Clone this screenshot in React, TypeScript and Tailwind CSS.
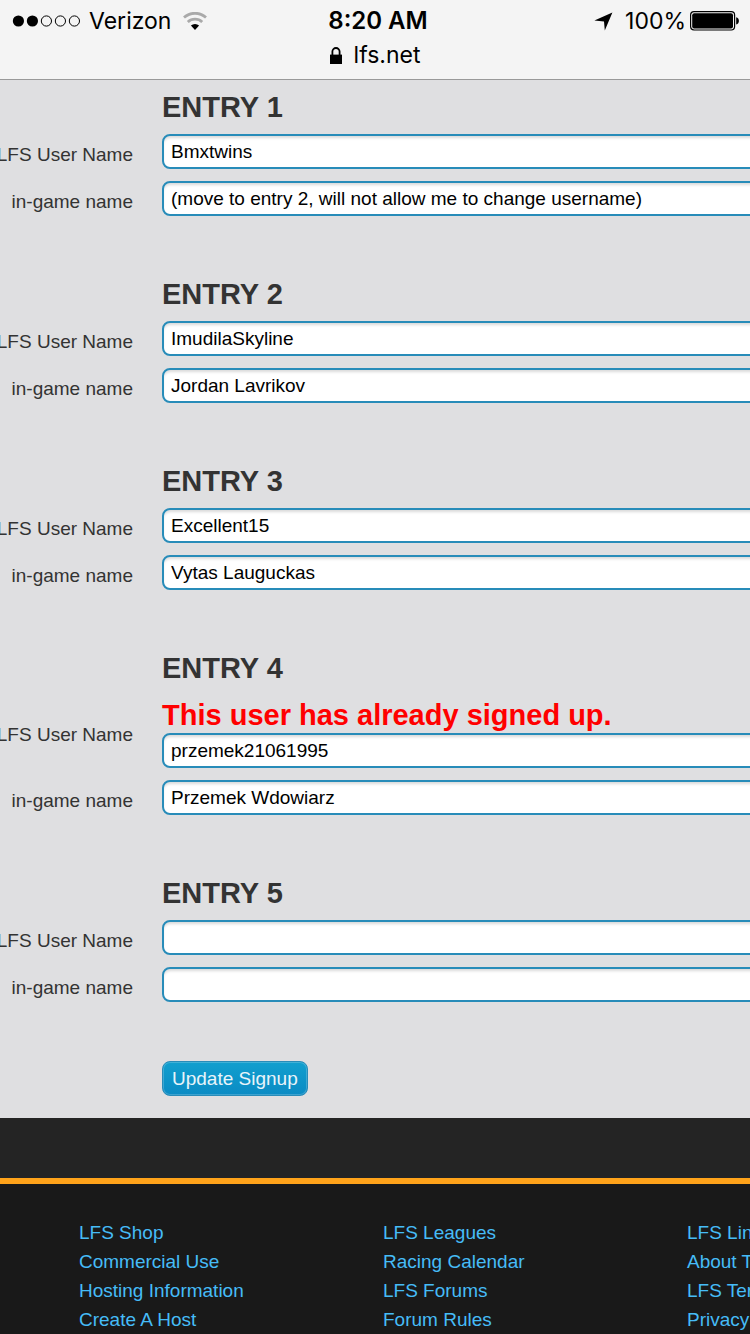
import type { ReactNode } from 'react';

type Entry = {
  id: number;
  user: string;
  name: string;
  error?: string;
};

const entries: Entry[] = [
  { id: 1, user: 'Bmxtwins', name: '(move to entry 2, will not allow me to change username)' },
  { id: 2, user: 'ImudilaSkyline', name: 'Jordan Lavrikov' },
  { id: 3, user: 'Excellent15', name: 'Vytas Lauguckas' },
  {
    id: 4,
    user: 'przemek21061995',
    name: 'Przemek Wdowiarz',
    error: 'This user has already signed up.',
  },
  { id: 5, user: '', name: '' },
];

const footerLinks = [
  ['LFS Shop', 'Commercial Use', 'Hosting Information', 'Create A Host'],
  ['LFS Leagues', 'Racing Calendar', 'LFS Forums', 'Forum Rules'],
  ['LFS Links', 'About Team', 'LFS Terms', 'Privacy Policy'],
];

const Signal = () => (
  <svg width="69" height="14" viewBox="0 0 69 14" aria-hidden="true">
    <circle cx="6.4" cy="7" r="5.6" />
    <circle cx="20.4" cy="7" r="5.6" />
    <g fill="none" stroke="#000" strokeWidth="1">
      <circle cx="34.4" cy="7" r="5.1" />
      <circle cx="48.4" cy="7" r="5.1" />
      <circle cx="62.4" cy="7" r="5.1" />
    </g>
  </svg>
);

const Wifi = () => (
  <svg width="24" height="18" viewBox="0 0 24 18" fill="none" aria-hidden="true">
    <path d="M1 5.5a16.4 16.4 0 0 1 22 0" stroke="#a9a9a9" strokeWidth="2.8" />
    <path d="M4.8 10a10.6 10.6 0 0 1 14.4 0" stroke="#a9a9a9" strokeWidth="2.8" />
    <path d="M7.9 13.6a6.2 6.2 0 0 1 8.2 0L12 18z" fill="#000" />
  </svg>
);

const StatusBar = () => (
  <div className="grid grid-cols-3 items-center pl-3 pr-[10px] h-[42px]">
    <div className="flex items-center">
      <Signal />
      <span className="ml-2 text-[23px]">Verizon</span>
      <span className="ml-3">
        <Wifi />
      </span>
    </div>
    <span className="pl-1 text-center text-2xl font-semibold">8:20 AM</span>
    <div className="flex items-center justify-end">
      <svg width="19" height="19" viewBox="0 0 19 19" aria-hidden="true">
        <path d="M18.4.6 10.8 18.4 10 9.4.4 8.6z" />
      </svg>
      <span className="ml-3 mr-1 text-[23px]">100%</span>
      <svg width="50" height="20" viewBox="0 0 50 20" aria-hidden="true">
        <rect x=".6" y=".6" width="44" height="18.4" rx="3.4" fill="none" stroke="#000" strokeWidth="1.2" />
        <rect x="2.2" y="2.2" width="40.8" height="15.2" rx="2" />
        <path d="M46.2 6.2c3.6.6 3.6 6.6 0 7.2z" />
      </svg>
    </div>
  </div>
);

const Row = ({ id, label, children }: { id: string; label: string; children: ReactNode }) => (
  <div className="grid grid-cols-[133px_1fr] gap-x-[29px] items-center">
    <label htmlFor={id} className="flex justify-end whitespace-nowrap pt-[6px] text-[#333]">
      {label}
    </label>
    <div>{children}</div>
  </div>
);

const TextBox = ({ id, value }: { id: string; value: string }) => (
  <input
    id={id}
    type="text"
    defaultValue={value}
    className="block w-full h-[35px] px-[7px] rounded-lg border-2 border-[#288cb9] bg-white text-black shadow-[inset_0_3px_3px_-1px_rgba(0,0,0,0.15)]"
  />
);

const App = () => (
  <div className="overflow-hidden bg-[#191919] font-['Liberation_Sans',Arial,sans-serif] text-[19px] leading-[22px]">
    <header className="h-20 border-b border-[#999] bg-[#f4f4f4] font-[Inter,sans-serif] text-black">
      <StatusBar />
      <div className="flex items-center justify-center">
        <svg width="12" height="17" viewBox="0 0 12 17" aria-hidden="true">
          <path d="M0 7.6h12V17H0z" />
          <path d="M2.4 8V4.6a3.6 3.6 0 0 1 7.2 0V8" fill="none" stroke="#000" strokeWidth="1.8" />
        </svg>
        <span className="ml-3 text-[23px] leading-[26px]">lfs.net</span>
      </div>
    </header>

    <main className="-mr-3 bg-[#dfdfe1]">
      <form onSubmit={(e) => e.preventDefault()}>
        {entries.map((entry) => (
          <section key={entry.id} className="pb-[51px]">
            <h2 className="pl-[162px] h-[54px] text-[29px] leading-[54px] font-bold text-[#333]">
              ENTRY {entry.id}
            </h2>
            <div className="flex flex-col gap-3">
              <Row id={`user-${entry.id}`} label="LFS User Name">
                {entry.error && (
                  <p className="h-[38px] text-[29px] leading-[40px] font-bold text-[#f00]">
                    {entry.error}
                  </p>
                )}
                <TextBox id={`user-${entry.id}`} value={entry.user} />
              </Row>
              <Row id={`name-${entry.id}`} label="in-game name">
                <TextBox id={`name-${entry.id}`} value={entry.name} />
              </Row>
            </div>
          </section>
        ))}
        <div className="pl-[162px] pt-2 pb-[22px]">
          <button
            type="submit"
            className="block h-[35px] px-[9px] rounded-lg border border-[#288cb9] bg-linear-to-b from-[#119fce] to-[#0b8bc4] text-[#e8f4fa] shadow-[inset_0_0_0_1px_rgba(255,255,255,0.2)]"
          >
            Update Signup
          </button>
        </div>
      </form>
    </main>

    <footer>
      <div className="h-[60px] bg-[#242424]" />
      <div className="h-[6px] bg-[#ffa31a]" />
      <nav className="grid grid-cols-[304px_304px_304px] pl-[79px] pt-[34px]">
        {footerLinks.map((column) => (
          <ul key={column[0]}>
            {column.map((text) => (
              <li key={text} className="leading-[29px]">
                <a href="#" className="text-[#46bcf7]">
                  {text}
                </a>
              </li>
            ))}
          </ul>
        ))}
      </nav>
    </footer>
  </div>
);

export default App;
